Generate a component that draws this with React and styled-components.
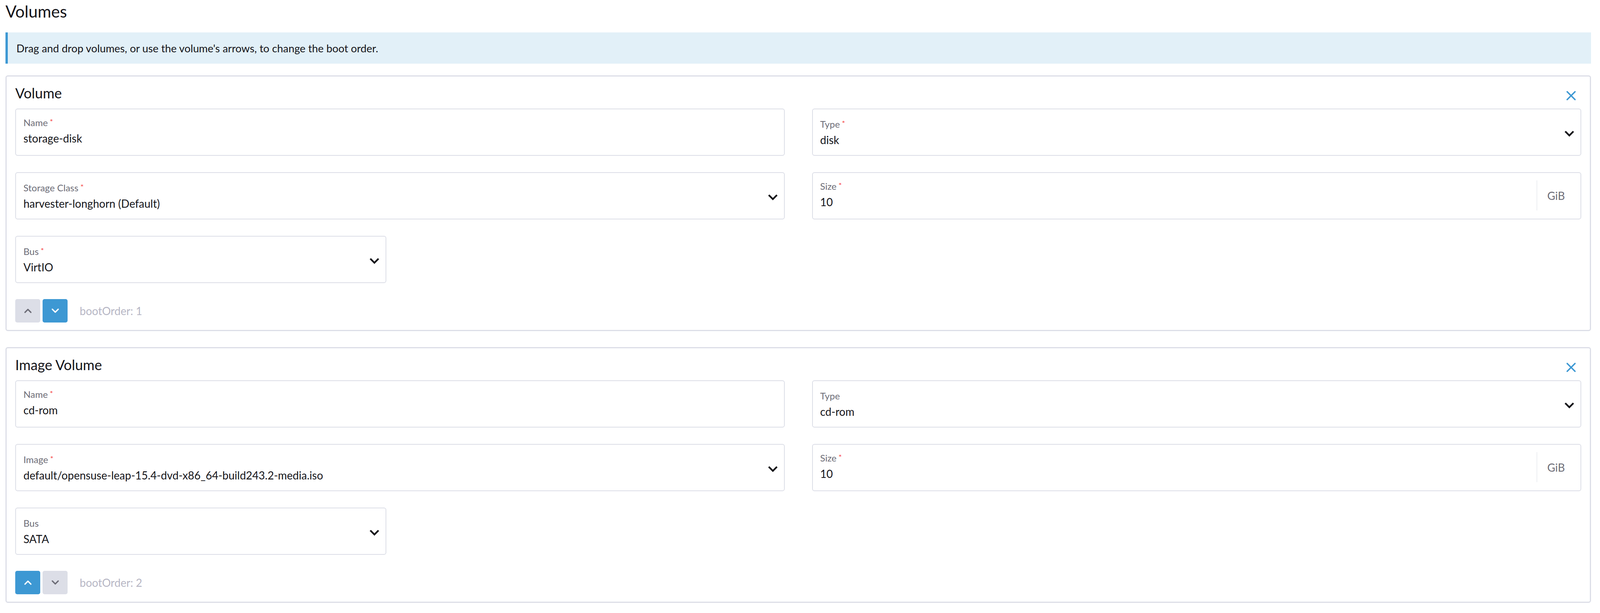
import React from "react";
import styled, { createGlobalStyle } from "styled-components";

const GlobalStyle = createGlobalStyle`
  body {
    margin: 0;
    background: #fff;
    color: #141419;
    font-family: Lato, "Open Sans", "Liberation Sans", sans-serif;
  }
  * { box-sizing: border-box; }
`;

const Page = styled.div`
  padding: 0 23px 20px 14px;
`;

const PageTitle = styled.h3`
  margin: 4px 0 0;
  font-size: 42px;
  line-height: 50px;
  font-weight: 400;
`;

const Banner = styled.div`
  margin-top: 29px;
  height: 80px;
  display: flex;
  align-items: center;
  padding-left: 22px;
  border-left: 6px solid #3d98d3;
  background: #e2f0f8;
  font-size: 27.3px;
`;

const Card = styled.div`
  margin-top: ${(p) => (p.$first ? "30px" : "41px")};
  border: 3px solid #dcdee7;
  border-radius: 6px;
  padding: 22px 22px 19px 22px;
`;

const CardHeader = styled.div`
  display: flex;
  justify-content: space-between;
  align-items: flex-start;
  height: 40px;
  margin-bottom: 20px;
`;

const CardTitle = styled.h4`
  margin: 0;
  font-size: 36px;
  line-height: 40px;
  font-weight: 400;
`;

const CloseButton = styled.button`
  margin: 14px 13px 0 0;
  padding: 0;
  border: none;
  background: none;
  width: 26px;
  height: 26px;
  display: flex;
`;

const Grid = styled.div`
  display: grid;
  grid-template-columns: repeat(4, 1fr);
  column-gap: 70px;
  row-gap: 42px;
`;

const Field = styled.div`
  grid-column: span ${(p) => p.$span || 2};
  height: 121px;
  border: 2px solid #dcdee7;
  border-radius: 6px;
  display: flex;
  padding-left: 19px;
  padding-right: ${(p) => (p.$addon ? "0" : "16px")};
`;

const FieldBody = styled.div`
  flex: 1;
  padding-top: ${(p) => (p.$select ? "24px" : "20px")};
`;

const Label = styled.div`
  font-size: 24px;
  line-height: 28px;
  color: #6c6c76;
  margin-bottom: 10px;
`;

const Required = styled.span`
  color: #f64747;
  font-size: 20px;
  margin-left: 5px;
  vertical-align: top;
  line-height: 22px;
`;

const Value = styled.div`
  font-size: 28px;
  line-height: 32px;
  color: #141419;
  white-space: nowrap;
`;

const Chevron = styled.div`
  align-self: center;
  margin-top: 7px;
  display: flex;
`;

const Addon = styled.div`
  margin: 19px 0 21px;
  border-left: 1px solid #dcdee7;
  padding: 0 40px 0 26px;
  display: flex;
  align-items: center;
  font-size: 28px;
  color: #6c6c76;
`;

const Footer = styled.div`
  margin-top: 41px;
  display: flex;
  align-items: center;
  gap: 6px;
`;

const OrderButton = styled.button`
  width: 64px;
  height: 60px;
  border: none;
  border-radius: 5px;
  padding: 0;
  display: flex;
  align-items: center;
  justify-content: center;
  background: ${(p) => (p.$active ? "#3d98d3" : "#dcdee7")};
  color: ${(p) => (p.$active ? "#ffffff" : "#6c6c76")};
`;

const BootOrder = styled.span`
  margin-left: 25px;
  font-size: 28px;
  color: #b6b6c4;
`;

const CloseIcon = () => (
  <svg width="26" height="26" viewBox="0 0 26 26">
    <path d="M3 3 L23 23 M23 3 L3 23" stroke="#3d98d3" strokeWidth="3.6" strokeLinecap="round" fill="none" />
  </svg>
);

const SelectIcon = () => (
  <svg width="25" height="16" viewBox="0 0 25 16">
    <path d="M2 2.5 L12.5 13 L23 2.5" stroke="#141419" strokeWidth="4.4" fill="none" />
  </svg>
);

const SmallChevron = ({ up }) => (
  <svg width="19" height="12" viewBox="0 0 19 12">
    <path
      d={up ? "M2 10 L9.5 2.5 L17 10" : "M2 2 L9.5 9.5 L17 2"}
      stroke="currentColor"
      strokeWidth="3.2"
      strokeLinecap="round"
      strokeLinejoin="round"
      fill="none"
    />
  </svg>
);

function FormField({ label, value, required, select, addon, span }) {
  return (
    <Field $span={span} $addon={addon}>
      <FieldBody $select={select}>
        <Label>
          {label}
          {required && <Required>*</Required>}
        </Label>
        <Value>{value}</Value>
      </FieldBody>
      {select && (
        <Chevron>
          <SelectIcon />
        </Chevron>
      )}
      {addon && <Addon>{addon}</Addon>}
    </Field>
  );
}

function VolumeCard({ title, first, fields, order, upActive, downActive }) {
  return (
    <Card $first={first}>
      <CardHeader>
        <CardTitle>{title}</CardTitle>
        <CloseButton>
          <CloseIcon />
        </CloseButton>
      </CardHeader>
      <Grid>
        {fields.map((f) => (
          <FormField key={f.label} {...f} />
        ))}
      </Grid>
      <Footer>
        <OrderButton $active={upActive}>
          <SmallChevron up />
        </OrderButton>
        <OrderButton $active={downActive}>
          <SmallChevron />
        </OrderButton>
        <BootOrder>bootOrder: {order}</BootOrder>
      </Footer>
    </Card>
  );
}

const volume = [
  { label: "Name", value: "storage-disk", required: true },
  { label: "Type", value: "disk", required: true, select: true },
  { label: "Storage Class", value: "harvester-longhorn (Default)", required: true, select: true },
  { label: "Size", value: "10", required: true, addon: "GiB" },
  { label: "Bus", value: "VirtIO", required: true, select: true, span: 1 },
];

const imageVolume = [
  { label: "Name", value: "cd-rom", required: true },
  { label: "Type", value: "cd-rom", select: true },
  { label: "Image", value: "default/opensuse-leap-15.4-dvd-x86_64-build243.2-media.iso", required: true, select: true },
  { label: "Size", value: "10", required: true, addon: "GiB" },
  { label: "Bus", value: "SATA", select: true, span: 1 },
];

export default function App() {
  return (
    <>
      <GlobalStyle />
      <Page>
        <PageTitle>Volumes</PageTitle>
        <Banner>Drag and drop volumes, or use the volume's arrows, to change the boot order.</Banner>
        <VolumeCard title="Volume" first fields={volume} order={1} downActive />
        <VolumeCard title="Image Volume" fields={imageVolume} order={2} upActive />
      </Page>
    </>
  );
}
